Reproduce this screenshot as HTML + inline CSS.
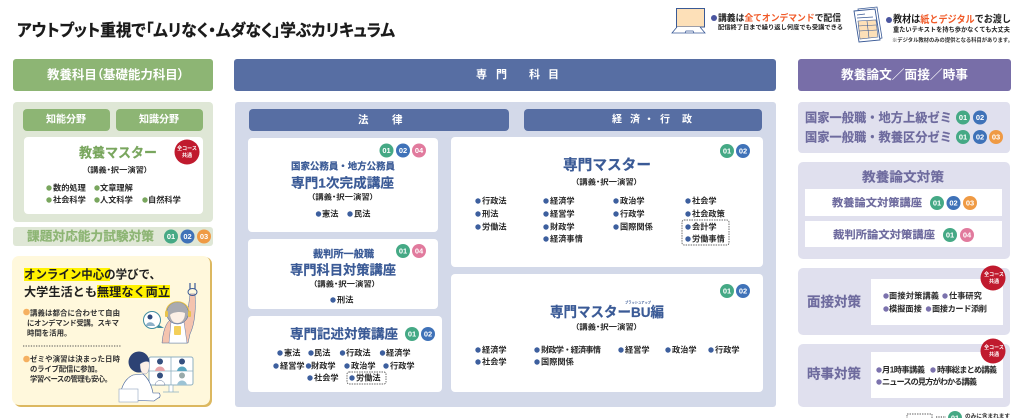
<!DOCTYPE html>
<html lang="ja"><head><meta charset="utf-8"><title>カリキュラム</title>
<style>
html,body{margin:0;padding:0;background:#fff;width:1030px;height:418px;overflow:hidden}
svg{display:block}
text{font-family:"Liberation Sans","Noto Sans CJK JP",sans-serif;dominant-baseline:central;font-weight:700}
.w{fill:#fff}
.g{fill:#45a985}.u{fill:#3f72b8}.o{fill:#ef9a44}.p{fill:#e17a9d}
.bd{fill:#fff;font-size:7.5px;text-anchor:middle}
.li{fill:#2a2a2a;font-size:8.2px;font-weight:700}
.dn{fill:#3d5f9e}.dp{fill:#7b72ad}.dg{fill:#79a65e}
.nv{fill:#3a5a96;stroke:#3a5a96;stroke-width:.2px}
.kk{fill:#2a2a2a;font-size:7.5px}
.pu{fill:#6e6b9e;stroke:#6e6b9e;stroke-width:.15px}
.yb{fill:#333;font-size:7.4px;font-weight:700}
.pa{font-feature-settings:"palt"}
</style></head><body>
<svg width="1030" height="418" viewBox="0 0 1030 418" xmlns="http://www.w3.org/2000/svg">
<rect width="1030" height="418" fill="#fff"/>
<text x="17" y="31" font-size="16.5" fill="#1a1a1a" stroke="#1a1a1a" stroke-width=".35" class="pa" textLength="378" lengthAdjust="spacingAndGlyphs">アウトプット重視で「ムリなく・ムダなく」学ぶカリキュラム</text>

<!-- laptop -->
<rect x="676.500" y="8.500" width="28" height="18.500" fill="#fde0b8" stroke="#3a5a96" stroke-width="1"/>
<path d="M677 27L672 33H705L700 27M685 33l1-2h7l1 2" fill="#fff" stroke="#3a5a96" stroke-width=".8"/>
<circle cx="714" cy="18" r="3" fill="#4a559f"/>
<text x="718" y="18" font-size="9.2" fill="#222" textLength="123" lengthAdjust="spacingAndGlyphs">講義は<tspan fill="#f05a28">全てオンデマンド</tspan>で配信</text>
<text x="718" y="28" font-size="6.2" fill="#222" textLength="125" lengthAdjust="spacingAndGlyphs">配信終了日まで繰り返し何度でも受講できる</text>
<!-- document -->
<path d="M858 9l19-2 5 31-19 3z" fill="#fff" stroke="#3a5a96" stroke-width=".8"/>
<path d="M854 11l21-2 5 31-21 2z" fill="#fff" stroke="#3a5a96" stroke-width=".9"/>
<path d="M857 15l8-1M857 18l16-1" stroke="#3a5a96" stroke-width=".7"/>
<path d="M858 21l18-1 2 17-18 2z" fill="#fde0b8" stroke="#3a5a96" stroke-width=".6"/>
<path d="M858 26l18-1M859 31l18-1M867 21l2 17" stroke="#3a5a96" stroke-width=".6"/>
<circle cx="889" cy="20" r="3" fill="#4a559f"/>
<text x="893" y="20" font-size="10" fill="#222" textLength="118" lengthAdjust="spacingAndGlyphs">教材は<tspan fill="#f05a28">紙とデジタル</tspan>でお渡し</text>
<text x="893" y="30" font-size="6.3" fill="#222" textLength="117" lengthAdjust="spacingAndGlyphs">重たいテキストを持ち歩かなくても大丈夫</text>
<text x="892" y="41" font-size="5.4" fill="#333" textLength="121" lengthAdjust="spacingAndGlyphs">※デジタル教材のみの提供となる科目があります。</text>

<!-- headers -->
<rect x="13" y="59" width="200" height="32" rx="3" fill="#8db574"/>
<text x="47" y="75" font-size="12.500" class="w pa" textLength="137" lengthAdjust="spacingAndGlyphs">教養科目（基礎能力科目）</text>
<rect x="234" y="59" width="542" height="32" rx="3" fill="#576ea3"/>
<text x="476" y="75" font-size="11" class="w">専</text><text x="496" y="75" font-size="11" class="w">門</text>
<text x="529" y="75" font-size="11" class="w">科</text><text x="548" y="75" font-size="11" class="w">目</text>
<rect x="798" y="59" width="213" height="32" rx="3" fill="#786ea8"/>
<text x="841" y="75" font-size="12.500" class="w" textLength="127" lengthAdjust="spacingAndGlyphs">教養論文／面接／時事</text>

<!-- left column -->
<rect x="13" y="102" width="200" height="120" rx="4" fill="#dfe7d6"/>
<rect x="23" y="109" width="87" height="22" rx="4" fill="#8db574"/>
<rect x="116" y="109" width="87" height="22" rx="4" fill="#8db574"/>
<text x="46" y="120" font-size="10" class="w">知能分野</text>
<text x="139" y="120" font-size="10" class="w">知識分野</text>
<rect x="24" y="137" width="179" height="77" rx="4" fill="#fff"/>
<text x="79" y="153" font-size="13.5" fill="#79a65e" stroke="#79a65e" stroke-width=".2" textLength="78" lengthAdjust="spacingAndGlyphs">教養マスター</text>
<circle cx="187" cy="152" r="12.5" fill="#c01a2e"/>
<text x="187" y="149" font-size="5" class="w" text-anchor="middle">全コース</text>
<text x="187" y="156" font-size="5" class="w" text-anchor="middle">共通</text>
<text x="86" y="170" class="kk pa" textLength="62" lengthAdjust="spacingAndGlyphs">（講義・択一演習）</text>
<circle cx="49" cy="188" r="2.7" class="dg"/><text x="53" y="188" class="li">数的処理</text>
<circle cx="97" cy="188" r="2.7" class="dg"/><text x="100" y="188" class="li">文章理解</text>
<circle cx="49" cy="200" r="2.7" class="dg"/><text x="53" y="200" class="li">社会科学</text>
<circle cx="97" cy="200" r="2.7" class="dg"/><text x="100" y="200" class="li">人文科学</text>
<circle cx="145" cy="200" r="2.7" class="dg"/><text x="148" y="200" class="li">自然科学</text>

<rect x="13" y="227" width="200" height="19" rx="3" fill="#dfe7d6"/>
<text x="27" y="236.5" font-size="12.7" fill="#8db574" stroke="#8db574" stroke-width=".2" textLength="127" lengthAdjust="spacingAndGlyphs">課題対応能力試験対策</text>
<circle cx="171" cy="236.5" r="7" class="g"/><text x="171" y="236.5" class="bd">01</text>
<circle cx="187.5" cy="236.5" r="7" class="u"/><text x="187.5" y="236.5" class="bd">02</text>
<circle cx="204" cy="236.5" r="7" class="o"/><text x="204" y="236.5" class="bd">03</text>

<!-- yellow card -->
<rect x="14" y="257" width="198" height="150" rx="7" fill="#dcb860"/>
<rect x="12" y="256" width="198" height="149" rx="7" fill="#fff8dc"/>
<rect x="24" y="268" width="86" height="13" fill="#fff200"/>
<rect x="97" y="285" width="73" height="13" fill="#fff200"/>
<text x="24" y="274.5" font-size="12" fill="#1f1f1f" textLength="137" lengthAdjust="spacingAndGlyphs">オンライン中心の学びで、</text>
<text x="24" y="292" font-size="12" fill="#1f1f1f" textLength="146" lengthAdjust="spacingAndGlyphs">大学生活とも無理なく両立</text>
<circle cx="26.5" cy="312" r="3.3" fill="#f5b060"/>
<text x="30" y="313" class="yb" textLength="90">講義は都合に合わせて自由</text>
<text x="27" y="323" class="yb" textLength="92">にオンデマンド受講。スキマ</text>
<text x="27" y="333" class="yb">時間を活用。</text>
<path d="M23 346H121" stroke="#555" stroke-width="1" stroke-dasharray="1.3 1.3"/>
<circle cx="26.5" cy="359" r="3.3" fill="#f5b060"/>
<text x="30" y="359" class="yb" textLength="90">ゼミや演習は決まった日時</text>
<text x="30" y="369" class="yb" textLength="72">のライブ配信に参加。</text>
<text x="30" y="379" class="yb" textLength="82">学習ペースの管理も安心。</text>
<!-- woman -->
<path d="M162 343c1-10 3-19 8-23l14-2c3-1 5-14 6-24l5 0c1 14 0 30-5 40l-2 9z" fill="#f4c3ae" stroke="#4a6aa0" stroke-width=".5"/>
<path d="M169 343l2-21 13 0 3 21z" fill="#fff" stroke="#4a6aa0" stroke-width=".4"/>
<circle cx="177.500" cy="313" r="11" fill="#a9aab0" stroke="#3a5a96" stroke-width=".5"/>
<path d="M170 315c2-3 11-4 15-2 0 6-3 10-7.500 10s-6.500-3-7.500-8z" fill="#fdf0e6"/>
<path d="M166 313c0-15 23-15 23 0" fill="none" stroke="#e8c34a" stroke-width="1"/>
<rect x="165" y="311" width="3" height="6" rx="1" fill="#e8c34a"/>
<rect x="188" y="311" width="3" height="6" rx="1" fill="#e8c34a"/>
<rect x="174" y="326" width="7" height="9" rx="1" fill="#f3cf5a"/>
<ellipse cx="192.500" cy="292" rx="4.500" ry="3.500" fill="none" stroke="#3a5a96" stroke-width="1"/>
<path d="M190 283v6M195 283v6" stroke="#3a5a96" stroke-width="1.200"/>
<circle cx="152" cy="320" r="8.500" fill="#fff" stroke="#3f8ca0" stroke-width="1"/>
<path d="M159 325l5 3-7 0z" fill="#3f8ca0"/>
<circle cx="150" cy="317" r="2.500" fill="#2e4a7d"/><path d="M146 326c0-5 8-5 9 0z" fill="#8db0c8"/>
<!-- monitor -->
<rect x="149" y="357" width="44" height="28" rx="2" fill="#fff" stroke="#8fb0c0" stroke-width="1"/>
<path d="M171 357v28M149 371h44" stroke="#8fb0c0" stroke-width=".8"/>
<path d="M169 385h4v7h-4zM163 392h16" stroke="#8fb0c0" stroke-width=".7" fill="#fff"/>
<circle cx="160" cy="361.500" r="3" fill="#35507f"/><path d="M155 371c1-6 9-6 10 0z" fill="#e7a3a8"/>
<circle cx="182" cy="361.500" r="3" fill="#35507f"/><path d="M177 371c1-6 9-6 10 0z" fill="#5aa6c0"/>
<circle cx="160" cy="375.500" r="3" fill="#35507f"/><path d="M155 385c1-6 9-6 10 0z" fill="#fff" stroke="#35507f" stroke-width=".4"/>
<circle cx="182" cy="375.500" r="3" fill="#9aa"/><path d="M177 385c1-6 9-6 10 0z" fill="#9cc3d4"/>
<!-- man -->
<path d="M120 397c1-11 6-19 13-22l10-1c6 5 9 13 10 19l6 0c2 2 1 5-1 5l-4 3-34-1z" fill="#fff" stroke="#3a5a96" stroke-width=".6"/>
<circle cx="139" cy="362" r="10.500" fill="#2d4274"/>
<path d="M140 364c4-3 7-3 9-2 1 7-1 12-4 12-4 0-5-5-5-10z" fill="#fdf0e6" stroke="#3a5a96" stroke-width=".3"/>
<rect x="119" y="389" width="19" height="13" fill="#fff" stroke="#8fa3c0" stroke-width=".6"/>

<!-- middle -->
<rect x="235" y="102" width="541" height="305" rx="3" fill="#d3d9e9"/>
<rect x="249" y="109" width="260" height="22" rx="4" fill="#576ea3"/>
<rect x="524" y="109" width="238" height="22" rx="4" fill="#576ea3"/>
<text x="358" y="120" font-size="10.500" class="w">法</text><text x="392" y="120" font-size="10.500" class="w">律</text>
<text x="612" y="120" font-size="10" class="w">経</text><text x="630" y="120" font-size="10" class="w">済</text>
<text x="649" y="120" font-size="10" class="w" text-anchor="middle" dx="0">・</text><text x="660" y="120" font-size="10" class="w">行</text><text x="682" y="120" font-size="10" class="w">政</text>

<!-- card A -->
<rect x="248" y="138" width="190" height="94" rx="4" fill="#fff"/>
<circle cx="386.500" cy="150.500" r="7" class="g"/><text x="386.500" y="150.500" class="bd">01</text>
<circle cx="403" cy="150.500" r="7" class="u"/><text x="403" y="150.500" class="bd">02</text>
<circle cx="419" cy="150.500" r="7" class="p"/><text x="419" y="150.500" class="bd">04</text>
<text x="291" y="167" font-size="9.500" class="nv" textLength="104" lengthAdjust="spacingAndGlyphs">国家公務員・地方公務員</text>
<text x="291" y="183" font-size="13" class="nv" textLength="103" lengthAdjust="spacingAndGlyphs">専門1次完成講座</text>
<text x="311" y="197" class="kk pa" textLength="63" lengthAdjust="spacingAndGlyphs">（講義・択一演習）</text>
<circle cx="318.500" cy="214" r="2.700" class="dn"/><text x="322" y="214" class="li">憲法</text>
<circle cx="350" cy="214" r="2.700" class="dn"/><text x="354" y="214" class="li">民法</text>

<!-- card B -->
<rect x="248" y="239" width="190" height="70" rx="4" fill="#fff"/>
<circle cx="403" cy="251" r="7" class="g"/><text x="403" y="251" class="bd">01</text>
<circle cx="419" cy="251" r="7" class="p"/><text x="419" y="251" class="bd">04</text>
<text x="313" y="255" font-size="10" class="nv" textLength="61" lengthAdjust="spacingAndGlyphs">裁判所一般職</text>
<text x="290" y="270" font-size="13" class="nv" textLength="106" lengthAdjust="spacingAndGlyphs">専門科目対策講座</text>
<text x="313" y="284" class="kk pa" textLength="63" lengthAdjust="spacingAndGlyphs">（講義・択一演習）</text>
<circle cx="333" cy="300" r="2.700" class="dn"/><text x="337" y="300" class="li">刑法</text>

<!-- card C -->
<rect x="248" y="316" width="194" height="76" rx="4" fill="#fff"/>
<text x="290" y="334" font-size="13" class="nv" textLength="108" lengthAdjust="spacingAndGlyphs">専門記述対策講座</text>
<circle cx="412" cy="334" r="7" class="g"/><text x="412" y="334" class="bd">01</text>
<circle cx="428" cy="334" r="7" class="u"/><text x="428" y="334" class="bd">02</text>
<circle cx="280" cy="353" r="2.700" class="dn"/><text x="284" y="353" class="li">憲法</text>
<circle cx="311" cy="353" r="2.700" class="dn"/><text x="314" y="353" class="li">民法</text>
<circle cx="342.500" cy="353" r="2.700" class="dn"/><text x="346" y="353" class="li">行政法</text>
<circle cx="382.500" cy="353" r="2.700" class="dn"/><text x="386" y="353" class="li">経済学</text>
<circle cx="276" cy="366" r="2.700" class="dn"/><text x="280" y="366" class="li">経営学</text>
<circle cx="308.500" cy="366" r="2.700" class="dn"/><text x="311" y="366" class="li">財政学</text>
<circle cx="347" cy="366" r="2.700" class="dn"/><text x="351" y="366" class="li">政治学</text>
<circle cx="386" cy="366" r="2.700" class="dn"/><text x="390" y="366" class="li">行政学</text>
<circle cx="310" cy="378" r="2.700" class="dn"/><text x="314" y="378" class="li">社会学</text>
<rect x="347" y="372" width="39" height="12" rx="2" fill="none" stroke="#333" stroke-width=".7" stroke-dasharray="1.500 1"/>
<circle cx="352" cy="378" r="2.700" class="dn"/><text x="356" y="378" class="li">労働法</text>

<!-- card D -->
<rect x="451" y="137" width="312" height="130" rx="4" fill="#fff"/>
<circle cx="727" cy="151" r="7" class="g"/><text x="727" y="151" class="bd">01</text>
<circle cx="743" cy="151" r="7" class="u"/><text x="743" y="151" class="bd">02</text>
<text x="563" y="166" font-size="14.500" class="nv" textLength="88" lengthAdjust="spacingAndGlyphs">専門マスター</text>
<text x="575" y="182" class="kk pa" textLength="63" lengthAdjust="spacingAndGlyphs">（講義・択一演習）</text>
<circle cx="478" cy="201" r="2.700" class="dn"/><text x="482" y="201" class="li">行政法</text>
<circle cx="478" cy="214" r="2.700" class="dn"/><text x="482" y="214" class="li">刑法</text>
<circle cx="478" cy="227" r="2.700" class="dn"/><text x="482" y="227" class="li">労働法</text>
<circle cx="546" cy="201" r="2.700" class="dn"/><text x="550" y="201" class="li">経済学</text>
<circle cx="546" cy="214" r="2.700" class="dn"/><text x="550" y="214" class="li">経営学</text>
<circle cx="546" cy="227" r="2.700" class="dn"/><text x="550" y="227" class="li">財政学</text>
<circle cx="546" cy="239" r="2.700" class="dn"/><text x="550" y="239" class="li">経済事情</text>
<circle cx="616" cy="201" r="2.700" class="dn"/><text x="620" y="201" class="li">政治学</text>
<circle cx="616" cy="214" r="2.700" class="dn"/><text x="620" y="214" class="li">行政学</text>
<circle cx="616" cy="227" r="2.700" class="dn"/><text x="620" y="227" class="li">国際関係</text>
<circle cx="688" cy="201" r="2.700" class="dn"/><text x="692" y="201" class="li">社会学</text>
<circle cx="688" cy="214" r="2.700" class="dn"/><text x="692" y="214" class="li">社会政策</text>
<rect x="682" y="220" width="47" height="25" rx="2" fill="none" stroke="#333" stroke-width=".7" stroke-dasharray="1.500 1"/>
<circle cx="688" cy="227" r="2.700" class="dn"/><text x="692" y="227" class="li">会計学</text>
<circle cx="688" cy="239" r="2.700" class="dn"/><text x="692" y="239" class="li">労働事情</text>

<!-- card E -->
<rect x="451" y="274" width="312" height="118" rx="4" fill="#fff"/>
<circle cx="727" cy="291" r="7" class="g"/><text x="727" y="291" class="bd">01</text>
<circle cx="743" cy="291" r="7" class="u"/><text x="743" y="291" class="bd">02</text>
<text x="625" y="302.500" font-size="3.200" fill="#3a5a96" textLength="26" lengthAdjust="spacingAndGlyphs">ブラッシュアップ</text>
<text x="550" y="312" font-size="14" class="nv" textLength="114" lengthAdjust="spacingAndGlyphs">専門マスターBU編</text>
<text x="575" y="327" class="kk pa" textLength="63" lengthAdjust="spacingAndGlyphs">（講義・択一演習）</text>
<circle cx="478" cy="350" r="2.700" class="dn"/><text x="482" y="350" class="li">経済学</text>
<circle cx="537" cy="350" r="2.700" class="dn"/><text x="541" y="350" class="li" textLength="60">財政学・経済事情</text>
<circle cx="621" cy="350" r="2.700" class="dn"/><text x="625" y="350" class="li">経営学</text>
<circle cx="668" cy="350" r="2.700" class="dn"/><text x="672" y="350" class="li">政治学</text>
<circle cx="711" cy="350" r="2.700" class="dn"/><text x="715" y="350" class="li">行政学</text>
<circle cx="478" cy="362" r="2.700" class="dn"/><text x="482" y="362" class="li">社会学</text>
<circle cx="537" cy="362" r="2.700" class="dn"/><text x="541" y="362" class="li">国際関係</text>

<!-- right -->
<rect x="798" y="102" width="212" height="51" rx="4" fill="#e0e0ee"/>
<text x="805" y="118" font-size="12.500" class="pu" textLength="147" lengthAdjust="spacingAndGlyphs">国家一般職・地方上級ゼミ</text>
<text x="805" y="137.500" font-size="12.500" class="pu" textLength="147" lengthAdjust="spacingAndGlyphs">国家一般職・教養区分ゼミ</text>
<circle cx="963" cy="117.500" r="7" class="g"/><text x="963" y="117.500" class="bd">01</text>
<circle cx="980" cy="117.500" r="7" class="u"/><text x="980" y="117.500" class="bd">02</text>
<circle cx="963" cy="137" r="7" class="g"/><text x="963" y="137" class="bd">01</text>
<circle cx="980" cy="137" r="7" class="u"/><text x="980" y="137" class="bd">02</text>
<circle cx="996" cy="137" r="7" class="o"/><text x="996" y="137" class="bd">03</text>

<rect x="798" y="162" width="212" height="97" rx="5" fill="#e0e0ee"/>
<text x="862" y="177" font-size="13" class="pu" textLength="82" lengthAdjust="spacingAndGlyphs">教養論文対策</text>
<rect x="805" y="189" width="197" height="27" fill="#fff"/>
<rect x="805" y="221" width="197" height="26" fill="#fff"/>
<text x="832" y="203" font-size="10.500" class="pu" textLength="90" lengthAdjust="spacingAndGlyphs">教養論文対策講座</text>
<circle cx="937" cy="203" r="7" class="g"/><text x="937" y="203" class="bd">01</text>
<circle cx="953.500" cy="203" r="7" class="u"/><text x="953.500" y="203" class="bd">02</text>
<circle cx="970" cy="203" r="7" class="o"/><text x="970" y="203" class="bd">03</text>
<text x="833" y="235" font-size="10.500" class="pu" textLength="102" lengthAdjust="spacingAndGlyphs">裁判所論文対策講座</text>
<circle cx="950" cy="235" r="7" class="g"/><text x="950" y="235" class="bd">01</text>
<circle cx="967" cy="235" r="7" class="p"/><text x="967" y="235" class="bd">04</text>

<rect x="798" y="268" width="212" height="67" rx="5" fill="#e0e0ee"/>
<text x="807" y="302" font-size="13.500" class="pu">面接対策</text>
<rect x="871" y="279" width="132" height="46" fill="#fff"/>
<circle cx="993" cy="278" r="12.500" fill="#c01a2e"/>
<text x="994" y="275" font-size="5" class="w" text-anchor="middle">全コース</text>
<text x="994" y="282" font-size="5" class="w" text-anchor="middle">共通</text>
<circle cx="886" cy="296" r="2.700" class="dp"/><text x="889" y="296" class="li" textLength="50">面接対策講義</text>
<circle cx="945" cy="296" r="2.700" class="dp"/><text x="949" y="296" class="li">仕事研究</text>
<circle cx="886" cy="309" r="2.700" class="dp"/><text x="889" y="309" class="li">模擬面接</text>
<circle cx="928.500" cy="309" r="2.700" class="dp"/><text x="932" y="309" class="li" textLength="55">面接カード添削</text>

<rect x="798" y="344" width="212" height="63" rx="5" fill="#e0e0ee"/>
<text x="807" y="374" font-size="13.500" class="pu">時事対策</text>
<rect x="871" y="352" width="132" height="46" fill="#fff"/>
<circle cx="993" cy="351" r="12.500" fill="#c01a2e"/>
<text x="994" y="348" font-size="5" class="w" text-anchor="middle">全コース</text>
<text x="994" y="355" font-size="5" class="w" text-anchor="middle">共通</text>
<circle cx="879" cy="370" r="2.700" class="dp"/><text x="882" y="370" class="li" textLength="43">月1時事講義</text>
<circle cx="933" cy="370" r="2.700" class="dp"/><text x="937" y="370" class="li" textLength="60">時事総まとめ講義</text>
<circle cx="879" cy="382" r="2.700" class="dp"/><text x="882" y="382" class="li" textLength="95">ニュースの見方がわかる講義</text>

<!-- legend -->
<rect x="907" y="414" width="25" height="10" fill="none" stroke="#333" stroke-width=".7" stroke-dasharray="1.500 1"/>
<path d="M936 417h10" stroke="#333" stroke-width="1" stroke-dasharray="1.200 1.200"/>
<circle cx="955" cy="418" r="7" class="g"/><text x="955" y="418" class="bd">01</text>
<text x="965" y="417" font-size="5.600" fill="#333" textLength="45" lengthAdjust="spacingAndGlyphs">のみに含まれます</text>
</svg>
</body></html>
